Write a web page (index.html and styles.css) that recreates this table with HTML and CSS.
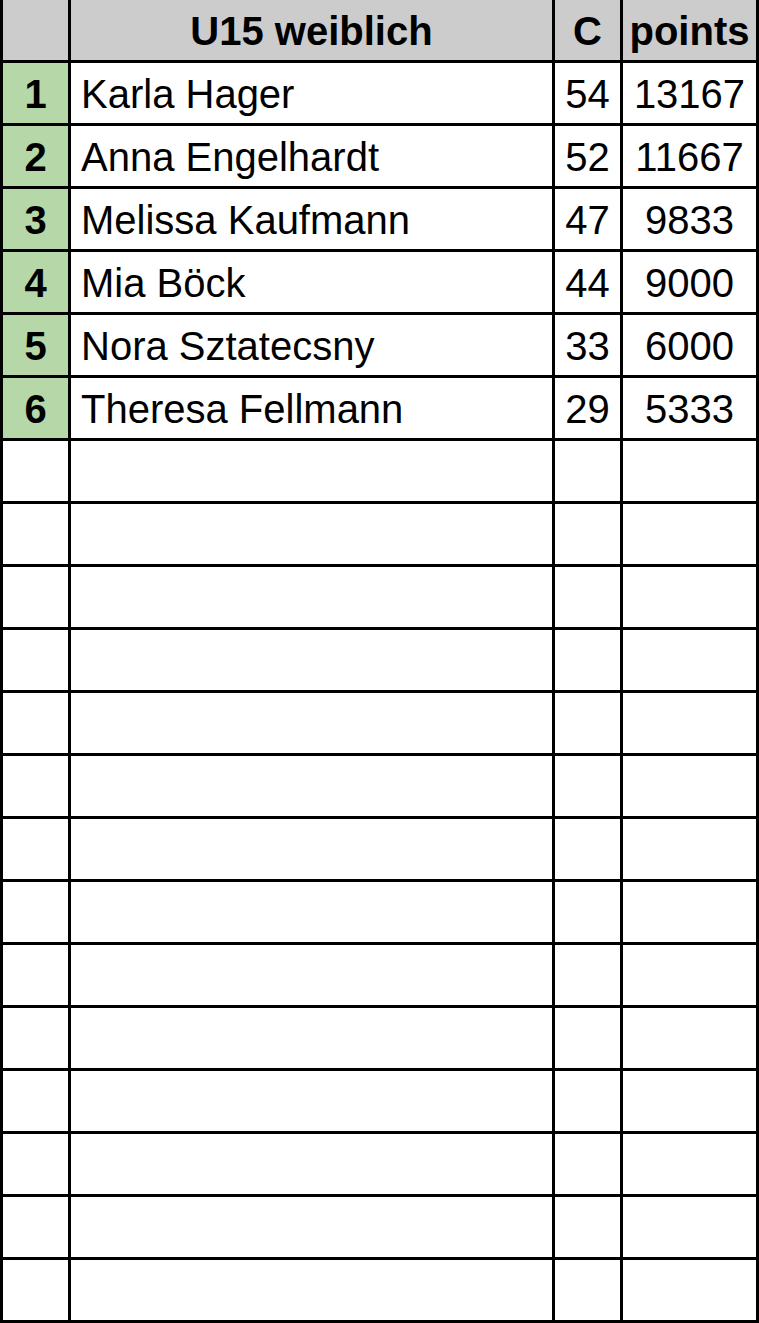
FILE: index.html
```html
<!DOCTYPE html>
<html lang="de">
<head>
<meta charset="utf-8">
<title>U15 weiblich</title>
<link rel="stylesheet" href="styles.css">
</head>
<body>
<div class="sheet">
  <div class="cell head"></div>
  <div class="cell head center">U15 weiblich</div>
  <div class="cell head center">C</div>
  <div class="cell head center">points</div>

  <div class="cell rank">1</div><div class="cell name">Karla Hager</div><div class="cell center">54</div><div class="cell center">13167</div>
  <div class="cell rank">2</div><div class="cell name">Anna Engelhardt</div><div class="cell center">52</div><div class="cell center">11667</div>
  <div class="cell rank">3</div><div class="cell name">Melissa Kaufmann</div><div class="cell center">47</div><div class="cell center">9833</div>
  <div class="cell rank">4</div><div class="cell name">Mia Böck</div><div class="cell center">44</div><div class="cell center">9000</div>
  <div class="cell rank">5</div><div class="cell name">Nora Sztatecsny</div><div class="cell center">33</div><div class="cell center">6000</div>
  <div class="cell rank">6</div><div class="cell name">Theresa Fellmann</div><div class="cell center">29</div><div class="cell center">5333</div>

  <div class="cell"></div><div class="cell"></div><div class="cell"></div><div class="cell"></div>
  <div class="cell"></div><div class="cell"></div><div class="cell"></div><div class="cell"></div>
  <div class="cell"></div><div class="cell"></div><div class="cell"></div><div class="cell"></div>
  <div class="cell"></div><div class="cell"></div><div class="cell"></div><div class="cell"></div>
  <div class="cell"></div><div class="cell"></div><div class="cell"></div><div class="cell"></div>
  <div class="cell"></div><div class="cell"></div><div class="cell"></div><div class="cell"></div>
  <div class="cell"></div><div class="cell"></div><div class="cell"></div><div class="cell"></div>
  <div class="cell"></div><div class="cell"></div><div class="cell"></div><div class="cell"></div>
  <div class="cell"></div><div class="cell"></div><div class="cell"></div><div class="cell"></div>
  <div class="cell"></div><div class="cell"></div><div class="cell"></div><div class="cell"></div>
  <div class="cell"></div><div class="cell"></div><div class="cell"></div><div class="cell"></div>
  <div class="cell"></div><div class="cell"></div><div class="cell"></div><div class="cell"></div>
  <div class="cell"></div><div class="cell"></div><div class="cell"></div><div class="cell"></div>
  <div class="cell"></div><div class="cell"></div><div class="cell"></div><div class="cell"></div>
</div>
</body>
</html>
```
FILE: styles.css
```css
html, body {
  margin: 0;
  padding: 0;
  background: #ffffff;
}

.sheet {
  display: grid;
  grid-template-columns: 65px 481px 65px 133px;
  grid-auto-rows: 60px;
  gap: 3px;
  padding: 0 3px 3px 3px;
  width: 759px;
  box-sizing: border-box;
  background: #000000;
  font-family: "Liberation Sans", Arial, sans-serif;
  font-size: 40px;
  color: #000000;
}

.cell {
  background: #ffffff;
  line-height: 58px;
  padding-top: 2px;
  white-space: nowrap;
  overflow: hidden;
}

.head {
  background: #cccccc;
  font-weight: bold;
}

.center {
  text-align: center;
}

.rank {
  background: #b6d7a8;
  font-weight: bold;
  text-align: center;
}

.name {
  padding-left: 10px;
}
```
